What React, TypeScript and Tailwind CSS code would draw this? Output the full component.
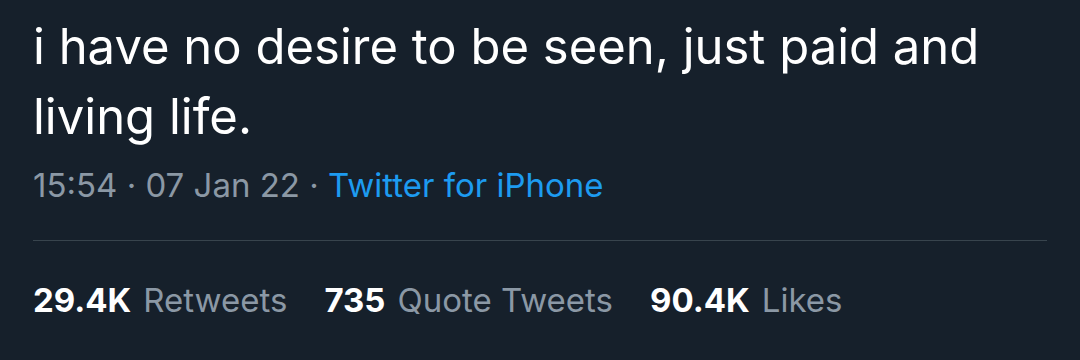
import React from "react";

type Stat = { value: string; label: string };

const stats: Stat[] = [
  { value: "29.4K", label: "Retweets" },
  { value: "735", label: "Quote Tweets" },
  { value: "90.4K", label: "Likes" },
];

export default function App() {
  return (
    <div
      className="w-[1080px] h-[360px] bg-[#16202b] text-white overflow-hidden"
      style={{ fontFamily: "Inter, 'Noto Sans', sans-serif" }}
    >
      <div className="pl-[33px] pr-[33px] pt-[12px]">
        <p className="text-[49px] leading-[70px] w-[1000px]">
          i have no desire to be seen, just paid and living life.
        </p>
        <div className="mt-[13px] text-[33px] leading-[40px] text-[#8b98a5]">
          15:54 · 07 Jan 22 ·{" "}
          <span className="text-[#1d9bf0]">Twitter for iPhone</span>
        </div>
        <div className="mt-[35px] h-px bg-[#38444d] w-[1014px]" />
        <div className="mt-[39px] flex gap-[37px] text-[33px] leading-[40px]">
          {stats.map((s) => (
            <div key={s.label} className="flex gap-[12px]">
              <span className="font-bold">{s.value}</span>
              <span className="text-[#8b98a5]">{s.label}</span>
            </div>
          ))}
        </div>
      </div>
    </div>
  );
}
